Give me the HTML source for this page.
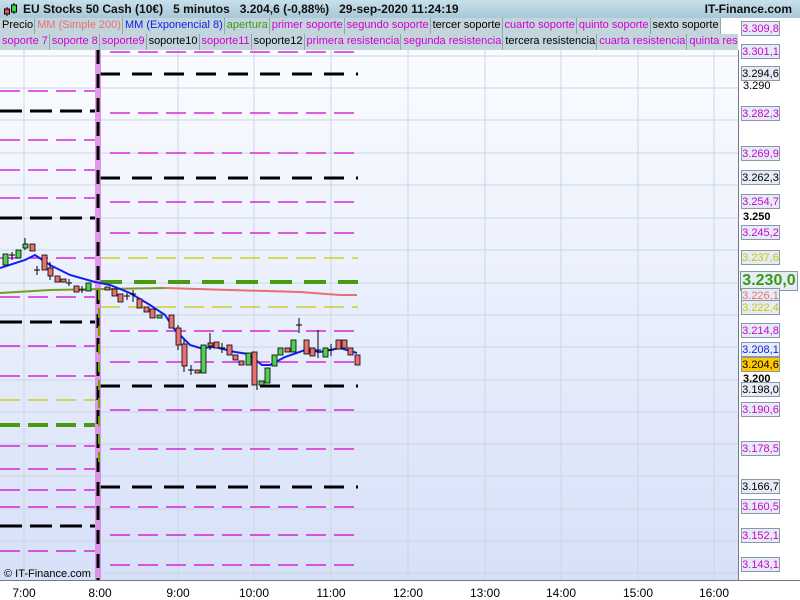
<!DOCTYPE html>
<html><head><meta charset="utf-8"><style>
*{margin:0;padding:0;box-sizing:border-box}
body{width:800px;height:600px;overflow:hidden;font-family:"Liberation Sans",sans-serif;background:#fff;position:relative}
.hdr{position:absolute;left:0;top:0;width:800px;height:18px;background:linear-gradient(#c8e0ea,#a8c8d8);font-size:12px;font-weight:bold;color:#111;line-height:18px}
.leg{position:absolute;left:0;height:16px;font-size:11px;line-height:15px;white-space:nowrap;overflow:hidden}
.leg span{display:inline-block;background:#c4d4dc;border-right:1px solid #8aa;padding:0 1px 0 2px;height:16px}
.m{color:#d000d0}
.ax{position:absolute;left:738px;top:18px;width:62px;height:564px;background:#fff;border-left:1px solid #778}
.lb{position:absolute;left:741px;width:39px;height:15px;font-size:11px;line-height:14px;text-align:center;background:#e6ecf6;border:1px solid #8898a8}
.tk{position:absolute;left:743px;font-size:11px;font-weight:bold;color:#000}
.bot{position:absolute;left:0;top:580px;width:800px;height:20px;background:#fff;border-top:1px solid #778;font-size:12px}
.bot span{position:absolute;top:5px;transform:translateX(-50%)}
</style></head><body>
<svg style="position:absolute;left:0;top:0" width="800" height="600">
<defs><linearGradient id="bg" x1="0" y1="0" x2="0" y2="1"><stop offset="0" stop-color="#fafcff"/><stop offset="1" stop-color="#d6e0f8"/></linearGradient></defs>
<rect x="0" y="50" width="738" height="530" fill="url(#bg)"/>
<g stroke="#cdd5e4" stroke-width="1">
<path d="M24 50V580M100 50V580M178 50V580M254 50V580M331 50V580M408 50V580M485 50V580M561 50V580M638 50V580M714 50V580"/>
<path d="M0 56H738M0 88H738M0 120H738M0 153H738M0 185H738M0 218H738M0 250H738M0 283H738M0 315H738M0 347H738M0 380H738M0 412H738M0 444H738M0 476H738M0 509H738M0 541H738M0 573H738"/>
</g>
<g fill="none" stroke="#d000d0" stroke-width="1.2" stroke-dasharray="20 8">
<path d="M0 91H95M0 140H95M0 170H95M0 198H95M0 258H95M0 297H95M0 346H95M0 376H95M0 446H95M0 469H95M0 490H95M0 507H95M0 551H95"/>
</g>
<g fill="none" stroke="#000" stroke-width="3" stroke-dasharray="22 8"><path d="M0 111H95M0 218H95M0 322H95M0 526H95"/></g>
<path d="M0 400H95" stroke="#c8c800" stroke-width="1.2" stroke-dasharray="20 8"/>
<path d="M0 425H95" stroke="#4a9a10" stroke-width="4" stroke-dasharray="20 8"/>
<g fill="none" stroke="#d000d0" stroke-width="1.2" stroke-dasharray="20 8">
<path d="M110 52H358M110 113H358M110 153H358M110 202H358M110 233H358M110 331H358M110 362H358M110 410H358M110 449H358M110 507H358M110 535H358M110 565H358"/>
</g>
<g fill="none" stroke="#000" stroke-width="3" stroke-dasharray="20 12"><path d="M100 74H358M100 178H358M100 386H358M100 487H358"/></g>
<g fill="none" stroke="#c8c800" stroke-width="1.2" stroke-dasharray="20 8"><path d="M100 258H358M100 307H358"/></g>
<path d="M100 282H358" stroke="#4a9a10" stroke-width="4" stroke-dasharray="22 12"/>
<rect x="95" y="50" width="6" height="530" fill="#e070e0" opacity="0.7"/>
<path d="M98 50V580" stroke="#000" stroke-width="3" stroke-dasharray="14 10"/>
<path d="M99 290V470" stroke="#6a0" stroke-width="2" stroke-dasharray="10 8"/>
<polyline fill="none" stroke="#7a9a20" stroke-width="2" points="0,293 50,290 165,288"/>
<polyline fill="none" stroke="#e87070" stroke-width="2" points="165,288 230,290 300,292 340,295 357,295"/>
<polyline fill="none" stroke="#1020f0" stroke-width="2" points="0,268 25,260 35,255 50,265 70,275 95,282 110,285 130,293 150,305 165,315 175,330 190,345 200,348 215,347 235,352 248,354 262,365 270,365 285,357 305,350 320,352 340,348 357,353"/>
<g stroke="#000" stroke-width="1">
<path d="M12 252V260M9 255H15M37 266V275M34 270H40M69 279V286M66 283H72M82 286V293M79 290H85M127 293V300M124 296H130M133 290V302M130 294H136M191 365V375M188 370H194M222 343V353M219 348H225M299 318V333M296 325H302M318 330V358M315 350H321M331 344V356M328 350H334M25 238V250M50 262V280M178 325V350M184 340V372M210 333V350M257 380V390"/>
</g>
<g stroke="#000" stroke-width="0.8">
<rect x="3" y="254" width="5" height="11" fill="#50d050"/>
<rect x="16" y="250" width="5" height="8" fill="#50d050"/>
<rect x="23" y="244" width="5" height="4" fill="#50d050"/>
<rect x="30" y="244" width="5" height="7" fill="#e87070"/>
<rect x="42" y="255" width="5" height="15" fill="#e87070"/>
<rect x="48" y="268" width="5" height="8" fill="#e87070"/>
<rect x="55" y="276" width="5" height="6" fill="#e87070"/>
<rect x="61" y="279" width="5" height="3" fill="#e87070"/>
<rect x="74" y="286" width="5" height="6" fill="#e87070"/>
<rect x="86" y="283" width="5" height="8" fill="#50d050"/>
<rect x="105" y="287" width="5" height="3" fill="#e87070"/>
<rect x="112" y="289" width="5" height="7" fill="#e87070"/>
<rect x="118" y="294" width="5" height="8" fill="#e87070"/>
<rect x="137" y="299" width="5" height="9" fill="#e87070"/>
<rect x="144" y="307" width="5" height="5" fill="#e87070"/>
<rect x="150" y="309" width="5" height="9" fill="#e87070"/>
<rect x="157" y="315" width="5" height="3" fill="#50d050"/>
<rect x="169" y="315" width="5" height="13" fill="#e87070"/>
<rect x="176" y="328" width="5" height="17" fill="#e87070"/>
<rect x="182" y="344" width="5" height="22" fill="#e87070"/>
<rect x="195" y="370" width="5" height="3" fill="#e87070"/>
<rect x="201" y="345" width="5" height="28" fill="#50d050"/>
<rect x="208" y="343" width="5" height="3" fill="#e87070"/>
<rect x="214" y="342" width="5" height="6" fill="#e87070"/>
<rect x="227" y="345" width="5" height="10" fill="#e87070"/>
<rect x="233" y="355" width="5" height="5" fill="#e87070"/>
<rect x="239" y="361" width="5" height="4" fill="#e87070"/>
<rect x="246" y="353" width="5" height="12" fill="#50d050"/>
<rect x="252" y="352" width="5" height="33" fill="#e87070"/>
<rect x="259" y="381" width="5" height="4" fill="#50d050"/>
<rect x="265" y="368" width="5" height="15" fill="#50d050"/>
<rect x="272" y="355" width="5" height="11" fill="#50d050"/>
<rect x="278" y="348" width="5" height="7" fill="#50d050"/>
<rect x="285" y="348" width="5" height="4" fill="#e87070"/>
<rect x="291" y="340" width="5" height="12" fill="#50d050"/>
<rect x="304" y="340" width="5" height="14" fill="#e87070"/>
<rect x="310" y="348" width="5" height="8" fill="#e87070"/>
<rect x="323" y="348" width="5" height="9" fill="#50d050"/>
<rect x="336" y="340" width="5" height="9" fill="#e87070"/>
<rect x="342" y="340" width="5" height="8" fill="#e87070"/>
<rect x="348" y="348" width="5" height="7" fill="#e87070"/>
<rect x="355" y="355" width="5" height="10" fill="#e87070"/>
</g>
<text x="4" y="577" font-family="Liberation Sans" font-size="11" fill="#000">© IT-Finance.com</text>
</svg>
<div class="hdr"><svg style="position:absolute;left:3px;top:2px" width="14" height="15"><path d="M4 5V14M11 1V12" stroke="#000"/><rect x="1.5" y="7" width="5" height="5" fill="#e85050" stroke="#000"/><rect x="8.5" y="3" width="5" height="7" fill="#40d040" stroke="#000"/></svg><span style="position:absolute;left:23px">EU Stocks 50 Cash (10€)&nbsp;&nbsp;&nbsp;5 minutos&nbsp;&nbsp;&nbsp;3.204,6 (-0,88%)&nbsp;&nbsp;&nbsp;29-sep-2020 11:24:19</span><span style="position:absolute;right:8px">IT-Finance.com</span></div>
<div class="leg" style="top:18px;width:738px"><span>Precio</span><span style="color:#e87070">MM (Simple 200)</span><span style="color:#1020f0">MM (Exponencial 8)</span><span style="color:#3a9a10">apertura</span><span class="m">primer soporte</span><span class="m">segundo soporte</span><span>tercer soporte</span><span class="m">cuarto soporte</span><span class="m">quinto soporte</span><span>sexto soporte</span></div>
<div class="leg" style="top:34px;width:738px"><span class="m">soporte 7</span><span class="m">soporte 8</span><span class="m">soporte9</span><span>soporte10</span><span class="m">soporte11</span><span>soporte12</span><span class="m">primera resistencia</span><span class="m">segunda resistencia</span><span>tercera resistencia</span><span class="m">cuarta resistencia</span><span class="m">quinta resistencia</span></div>
<div class="ax" style="top:50px;height:530px"></div>
<div class="ax" style="top:18px;height:32px;left:738px;border-left:none;background:#fff"></div>
<div class="tk" style="top:80px;font-weight:normal">3.290</div>
<div class="tk" style="top:211px">3.250</div>
<div class="tk" style="top:373px">3.200</div>
<div class="lb m" style="top:21px">3.309,8</div>
<div class="lb m" style="top:44px">3.301,1</div>
<div class="lb" style="top:66px">3.294,6</div>
<div class="lb m" style="top:106px">3.282,3</div>
<div class="lb m" style="top:146px">3.269,9</div>
<div class="lb" style="top:170px">3.262,3</div>
<div class="lb m" style="top:194px">3.254,7</div>
<div class="lb m" style="top:225px">3.245,2</div>
<div class="lb" style="top:250px;color:#c8c800">3.237,6</div>
<div class="lb" style="top:271px;left:740px;width:58px;height:20px;font-size:16px;line-height:18px;font-weight:bold;color:#3a9a10">3.230,0</div>
<div class="lb" style="top:288px;color:#e87070">3.226,1</div>
<div class="lb" style="top:300px;color:#c8c800">3.222,4</div>
<div class="lb m" style="top:323px">3.214,8</div>
<div class="lb" style="top:342px;color:#1020f0">3.208,1</div>
<div class="lb" style="top:357px;background:#ffc800">3.204,6</div>
<div class="lb" style="top:382px">3.198,0</div>
<div class="lb m" style="top:402px">3.190,6</div>
<div class="lb m" style="top:441px">3.178,5</div>
<div class="lb" style="top:479px">3.166,7</div>
<div class="lb m" style="top:499px">3.160,5</div>
<div class="lb m" style="top:528px">3.152,1</div>
<div class="lb m" style="top:557px">3.143,1</div>
<div class="bot"><span style="left:24px">7:00</span><span style="left:100px">8:00</span><span style="left:178px">9:00</span><span style="left:254px">10:00</span><span style="left:331px">11:00</span><span style="left:408px">12:00</span><span style="left:485px">13:00</span><span style="left:561px">14:00</span><span style="left:638px">15:00</span><span style="left:714px">16:00</span></div>
</body></html>
